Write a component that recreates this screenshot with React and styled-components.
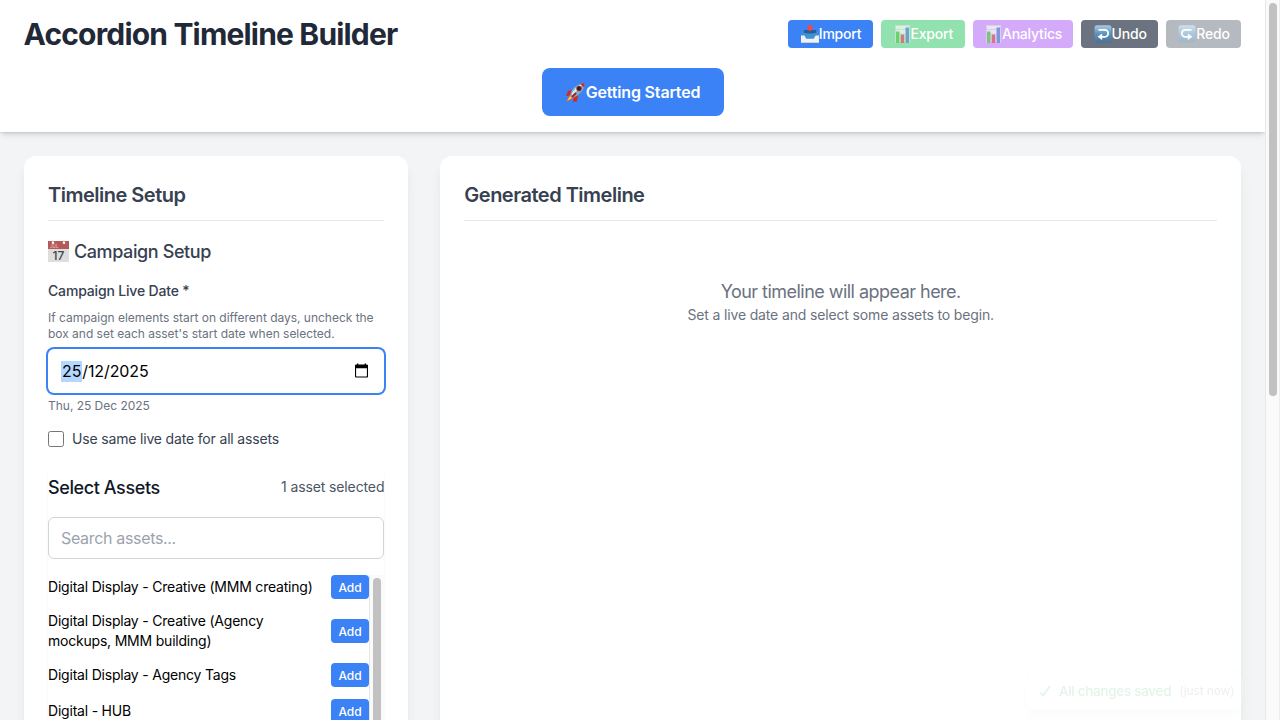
import React from 'react';
import styled, { createGlobalStyle } from 'styled-components';

const GlobalStyle = createGlobalStyle`
  *, *::before, *::after { box-sizing: border-box; }
  html, body { margin: 0; overflow: hidden; }
  body { font-family: Inter, "Liberation Sans", sans-serif; font-size: 16px; line-height: 24px; color: #000; background: #f3f4f6; }
  h1, h2, h3, p { margin: 0; }
  button, input { font-family: inherit; }
  svg { flex: none; }
`;

const Screen = styled.div`display: flex; height: 720px; overflow: hidden;`;
const Page = styled.div`flex: 1; min-width: 0; height: 100%; overflow: hidden; background: #f3f4f6;`;

const PageScroll = styled.div`
  width: 15px; padding: 3px 3px 0; background: #fafafa; border-left: 1px solid #e8e8e8; border-right: 1px solid #ededed;
`;
const PageThumb = styled.div`width: 8px; height: 393px; border-radius: 4px; background: #c1c1c1;`;

const Header = styled.header`
  position: relative; height: 132px; padding: 16px 24px; background: #fff;
  box-shadow: 0 4px 6px -1px rgba(0,0,0,.1), 0 2px 4px -2px rgba(0,0,0,.1), 0 1px 2px rgba(0,0,0,.06);
`;
const HeaderRow = styled.div`display: flex; align-items: center; justify-content: space-between;`;
const Title = styled.h1`margin-left: -0.5px; font-size: 30px; line-height: 36px; font-weight: 700; letter-spacing: -0.82px; color: #1f2937;`;
const Actions = styled.div`display: flex; gap: 8px;`;
const ActionButton = styled.button`
  display: flex; align-items: center; justify-content: center; height: 28px; width: ${p => p.$width}px; padding: 0 0 0 1px;
  border: 0; border-radius: 4px; background: ${p => p.$bg}; color: #fff;
  font-size: 14px; line-height: 20px; font-weight: 500; letter-spacing: -0.2px; white-space: nowrap;
`;
const StartRow = styled.div`display: flex; justify-content: center; margin-top: 16px;`;
const StartButton = styled.button`
  display: flex; align-items: center; justify-content: center; height: 48px; width: 182px; padding: 0;
  border: 0; border-radius: 8px; background: #3b82f6; color: #fff;
  font-size: 16px; line-height: 24px; font-weight: 600; letter-spacing: -0.17px; white-space: nowrap;
`;

const Main = styled.main`display: grid; grid-template-columns: 384.33px 1fr; gap: 32px; padding: 24px;`;
const Card = styled.section`
  min-width: 0; height: 900px; padding: 24px; border-radius: 12px; background: #fff;
  box-shadow: 0 10px 15px -3px rgba(0,0,0,.08), 0 4px 6px -4px rgba(0,0,0,.08);
`;
const CardTitle = styled.h2`
  padding: 1px 0 11px; margin-bottom: 16px; border-bottom: 1px solid #e5e7eb;
  font-size: 20px; line-height: 28px; font-weight: 600; letter-spacing: -0.5px; color: #374151;
`;
const SectionTitle = styled.h3`
  display: flex; align-items: center; gap: 5px; margin-bottom: 16px;
  font-size: 18px; line-height: 28px; font-weight: 500; letter-spacing: -0.4px; color: #374151;
`;
const SectionText = styled.span`padding-top: 2px; line-height: 26px;`;
const Label = styled.p`margin-bottom: 8px; font-size: 14px; line-height: 20px; font-weight: 500; letter-spacing: -0.17px; color: #374151;`;
const Hint = styled.p`padding-top: 1px; margin-bottom: ${p => p.$after}px; font-size: 12px; line-height: 16px; letter-spacing: -0.02px; color: #6b7280;`;
const DateField = styled.div`
  display: flex; align-items: center; justify-content: space-between; height: 44px; margin-bottom: 4px; padding: 0 16px 0 13px;
  border-radius: 6px; background: #fff; box-shadow: 0 0 0 2px #3b82f6; font-size: 16px; letter-spacing: -0.1px;
  svg { margin-bottom: 2px; }
`;
const DayPart = styled.span`display: inline-block; height: 21px; line-height: 21px; padding: 0 1px; background: #b3d7ff;`;
const CheckRow = styled.div`display: flex; align-items: center; gap: 8px; height: 20px; font-size: 14px; line-height: 20px; letter-spacing: -0.17px; color: #374151;`;
const Checkbox = styled.span`width: 16px; height: 16px; border: 1px solid #767676; border-radius: 2.5px; background: #fff;`;

const Assets = styled.div`margin-top: 24px; box-shadow: -1px 0 0 #fafafa, 1px 0 0 #fafafa;`;
const AssetsHead = styled.div`display: flex; align-items: center; justify-content: space-between; height: 28px; margin-bottom: 16px;`;
const AssetsTitle = styled.h3`padding-top: 2px; font-size: 18px; line-height: 28px; font-weight: 500; letter-spacing: -0.4px; color: #111827;`;
const AssetsCount = styled.span`font-size: 14px; line-height: 20px; letter-spacing: -0.12px; color: #4b5563;`;
const Search = styled.input`
  display: block; width: 100%; height: 42px; margin-bottom: 16px; padding: 8px 12px;
  border: 1px solid #d1d5db; border-radius: 6px; background: #fff; font-size: 16px; line-height: 24px; letter-spacing: -0.33px; outline: none;
  &::placeholder { color: #9ca3af; opacity: 1; }
`;
const ListFrame = styled.div`display: flex; height: 384px;`;
const List = styled.div`flex: 1; display: flex; flex-direction: column; gap: 12px;`;
const ListScroll = styled.div`width: 15px; padding: 3px 3px 0; background: #fafafa; border-left: 1px solid #e8e8e8;`;
const ListThumb = styled.div`width: 8px; height: 240px; border-radius: 4px; background: #c1c1c1;`;
const AssetRow = styled.div`display: flex; align-items: center; justify-content: space-between; min-height: 24px;`;
const AssetName = styled.span`width: 270px; font-size: 14px; line-height: 20px; letter-spacing: -0.21px;`;
const AddButton = styled.button`
  width: 38.5px; height: 24px; padding: 1px 0 0; border: 0; border-radius: 4px; background: #3b82f6;
  color: #fff; font-size: 12px; line-height: 16px; font-weight: 500;
`;

const Empty = styled.div`padding-top: 41px; text-align: center; color: #6b7280;`;
const EmptyTitle = styled.p`font-size: 18px; line-height: 28px; letter-spacing: -0.53px;`;
const EmptyText = styled.p`margin-top: -1px; font-size: 14px; line-height: 20px; letter-spacing: -0.15px;`;

const Toast = styled.div`
  position: fixed; left: 1026px; top: 671px; width: 217px; height: 39px; padding: 0 12px 0 13px;
  display: flex; align-items: center; border-radius: 8px; background: #fff; opacity: .12;
  box-shadow: 0 10px 15px -3px rgba(0,0,0,.15), 0 0 1px rgba(0,0,0,.5);
  color: #16a34a; font-size: 13.5px; font-weight: 500; letter-spacing: -0.3px; white-space: nowrap;
`;
const ToastText = styled.span`margin: 0 8px 0 8px;`;
const ToastTime = styled.span`font-size: 12px; font-weight: 400; letter-spacing: -0.15px; color: #6b7280;`;

const InboxIcon = () => (
  <svg width="18" height="18" viewBox="0 0 18 18">
    <path d="M3 5h12l3 6v7H0v-7z" fill="#9eb4cc" />
    <path d="M3 5h12l2.500 6-2 4h-13l-2-4z" fill="#225f9b" />
    <path d="M2 7c2 2 12 2 14 0l1 4-3 3H4l-3-3z" fill="#3f91d8" />
    <path d="M0 10.500h3c1.200 0 1.400 3.300 2.800 3.300h6.400c1.400 0 1.600-3.300 2.800-3.300h3V18H0z" fill="#f1f1ed" />
    <path d="M0 17h18v1H0z" fill="#ccd1d5" />
    <path d="M7 0h4v2.500h2L9 6.400 5 2.500h2z" fill="#ec4b4b" />
  </svg>
);
const ChartIcon = () => (
  <svg width="17" height="18" viewBox="0 0 17 18" opacity=".75">
    <path d="M1 0h15v18H1z" fill="#f3f6f6" />
    <path d="M1.500.5h14v17h-14zM1 4.500h15M1 9h15M1 13.500h15" fill="none" stroke="#cfd8dc" strokeWidth=".8" />
    <path d="M2 6.500h3.500V18H2z" fill="#62c95c" />
    <path d="M6.600 9.500h3.700V18H6.600z" fill="#d6616b" />
    <path d="M11.500 2.500H15V18h-3.500z" fill="#658fd0" />
  </svg>
);
const ArrowIcon = ({ flip, id, colors }) => (
  <svg width="18" height="18" viewBox="0 0 18 18">
    <defs>
      <linearGradient id={id} x2="0" y2="1">
        <stop stopColor={colors[0]} /><stop offset=".5" stopColor={colors[1]} /><stop offset="1" stopColor={colors[2]} />
      </linearGradient>
    </defs>
    <rect x=".5" y=".3" width="17" height="17.200" rx="2.500" fill={`url(#${id})`} />
    <g transform={flip ? 'translate(18 0) scale(-1 1)' : undefined}>
      <path d="M4.500 4.800h6.200a3.500 3.500 0 0 1 0 7H7.500" fill="none" stroke="#fff" strokeWidth="1.800" />
      <path d="M8.200 8.500v6.400L3.500 11.800z" fill="#fff" />
    </g>
  </svg>
);
const RocketIcon = () => (
  <svg width="21" height="21" viewBox="0 0 21 21">
    <path d="M5 13 1 20l8-4z" fill="#f05a28" />
    <path d="m5 14-3 5 5-3z" fill="#ffd43b" />
    <path d="m8 8-5 1-2 5 5-1zM13 13l-1 6-4 1 1-6z" fill="#d7261e" />
    <path d="M5 13C7 6 12 1.500 19.500 1c.2 7-4.500 12-12 15z" fill="#89a9bd" />
    <path d="M7 11C10 6 13 3.500 18 2L7 14z" fill="#dceaf1" />
    <path d="M15 1.700 19.500 1l-.4 4.500z" fill="#c92c29" />
    <circle cx="14" cy="6.500" r="2.700" fill="#9c2929" /><circle cx="14" cy="6.500" r="1.800" fill="#20262b" />
    <path d="m7 15 4-4" stroke="#9d241e" strokeWidth="1.800" />
  </svg>
);
const CalendarEmoji = () => (
  <svg width="21" height="22" viewBox="0 0 21 22">
    <path d="M0 1h21v21H0z" fill="#dedede" />
    <path d="M0 1h21v8H0z" fill="#b5595b" />
    <circle cx="5" cy="2.800" r="1.300" fill="#fff" /><circle cx="16" cy="2.800" r="1.300" fill="#fff" />
    <path d="m5 2-1-2M16 2l-1-2" stroke="#ddd" />
    <text x="2" y="8" fill="#e5b9b9" fontSize="4.500" letterSpacing="0" fontFamily="Inter, sans-serif">JUL</text>
    <text x="10.500" y="19.500" textAnchor="middle" fill="#444" fontSize="12" letterSpacing="0" fontWeight="500" fontFamily="Inter, sans-serif">17</text>
  </svg>
);
const PickerIcon = () => (
  <svg width="13" height="15" viewBox="0 0 13 15">
    <path d="M1.500 2h10a1 1 0 0 1 1 1v10a1 1 0 0 1-1 1h-10a1 1 0 0 1-1-1V3a1 1 0 0 1 1-1z" fill="none" stroke="#000" strokeWidth="1.200" />
    <path d="M0 2h13v3.200H0zM2 .5h1.300V3H2zM9.700.5H11V3H9.700z" fill="#000" />
  </svg>
);
const CheckIcon = () => (
  <svg width="12" height="12" viewBox="0 0 12 12"><path d="m1 7.500 3 3L11 1" fill="none" stroke="#16a34a" strokeWidth="1.700" /></svg>
);

const undoColors = ['#a9cbe4', '#5d91bc', '#4a7196'];
const redoColors = ['#cfdfeb', '#adc6d9', '#a0b5c8'];

const assets = [
  'Digital Display - Creative (MMM creating)',
  'Digital Display - Creative (Agency mockups, MMM building)',
  'Digital Display - Agency Tags',
  'Digital - HUB',
];

export default function App() {
  return (
    <Screen>
      <GlobalStyle />
      <Page>
        <Header>
          <HeaderRow>
            <Title>Accordion Timeline Builder</Title>
            <Actions>
              <ActionButton $bg="#3b82f6" $width={84.5}><InboxIcon />Import</ActionButton>
              <ActionButton $bg="#91e2af" $width={84}><ChartIcon />Export</ActionButton>
              <ActionButton $bg="#d4aafb" $width={100.5}><ChartIcon />Analytics</ActionButton>
              <ActionButton $bg="#6b7280" $width={76.7}><ArrowIcon id="undo" colors={undoColors} />Undo</ActionButton>
              <ActionButton $bg="#b5b9c0" $width={75}><ArrowIcon id="redo" colors={redoColors} flip />Redo</ActionButton>
            </Actions>
          </HeaderRow>
          <StartRow><StartButton><RocketIcon />Getting Started</StartButton></StartRow>
        </Header>
        <Main>
          <Card>
            <CardTitle>Timeline Setup</CardTitle>
            <SectionTitle><CalendarEmoji /><SectionText>Campaign Setup</SectionText></SectionTitle>
            <Label>Campaign Live Date *</Label>
            <Hint $after={7}>If campaign elements start on different days, uncheck the box and set each asset's start date when selected.</Hint>
            <DateField><span><DayPart>25</DayPart>/12/2025</span><PickerIcon /></DateField>
            <Hint $after={15}>Thu, 25 Dec 2025</Hint>
            <CheckRow><Checkbox />Use same live date for all assets</CheckRow>
            <Assets>
              <AssetsHead><AssetsTitle>Select Assets</AssetsTitle><AssetsCount>1 asset selected</AssetsCount></AssetsHead>
              <Search placeholder="Search assets..." />
              <ListFrame>
                <List>
                  {assets.map(name => (
                    <AssetRow key={name}><AssetName>{name}</AssetName><AddButton>Add</AddButton></AssetRow>
                  ))}
                </List>
                <ListScroll><ListThumb /></ListScroll>
              </ListFrame>
            </Assets>
          </Card>
          <Card>
            <CardTitle>Generated Timeline</CardTitle>
            <Empty>
              <EmptyTitle>Your timeline will appear here.</EmptyTitle>
              <EmptyText>Set a live date and select some assets to begin.</EmptyText>
            </Empty>
          </Card>
        </Main>
      </Page>
      <PageScroll><PageThumb /></PageScroll>
      <Toast><CheckIcon /><ToastText>All changes saved</ToastText><ToastTime>(just now)</ToastTime></Toast>
    </Screen>
  );
}
